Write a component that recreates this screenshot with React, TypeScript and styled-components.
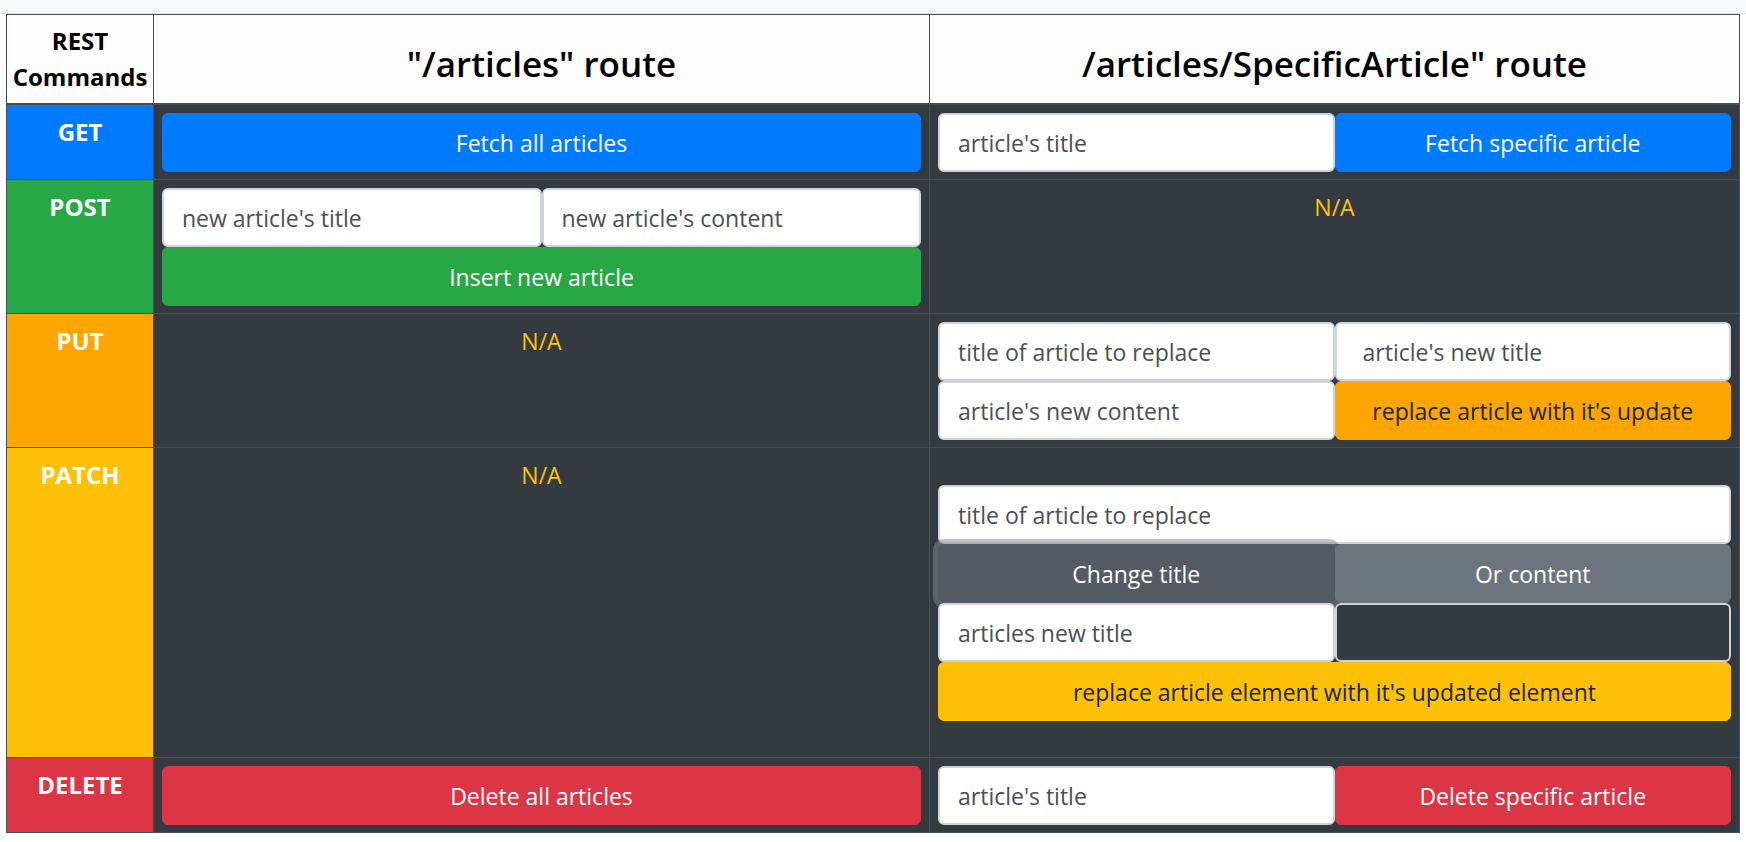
import React from 'react';
import styled, { createGlobalStyle } from 'styled-components';

const GlobalStyle = createGlobalStyle`
  html, body {
    margin: 0;
    padding: 0;
    background: #fff;
    font-family: "Open Sans", "Noto Sans", sans-serif;
    color: #212529;
  }
  * {
    box-sizing: border-box;
  }
`;

const TopBar = styled.div`
  height: 14px;
  background: #f8f9fa;
  border-bottom: 1px solid #dee2e6;
`;

const Page = styled.div`
  padding: 0 6px;
`;

const Table = styled.div`
  display: grid;
  grid-template-columns: 147px 776fr 810fr;
  border-left: 1px solid #454d55;
  border-top: 1px solid #454d55;
`;

const HeadCell = styled.div`
  height: 90px;
  background: #fdfdfd;
  border-right: 1px solid #454d55;
  border-bottom: 2px solid #454d55;
  display: flex;
  align-items: center;
  justify-content: center;
  text-align: center;
`;

const HeadLabel = styled.div`
  font-size: 24px;
  line-height: 36px;
  font-weight: 700;
  color: #000;
`;

const RouteTitle = styled.h3`
  margin: 0;
  padding-top: 8px;
  font-size: 35px;
  line-height: 43px;
  font-weight: 600;
  color: #000;
`;

const CommandCell = styled.div<{ $bg: string }>`
  background: ${p => p.$bg};
  border-right: 1px solid #454d55;
  border-bottom: 1px solid #454d55;
  padding-top: 12px;
  text-align: center;
  font-size: 24px;
  line-height: 30px;
  font-weight: 700;
  color: #fff;
`;

const BodyCell = styled.div<{ $padY?: string }>`
  background: #343a40;
  border-right: 1px solid #454d55;
  border-bottom: 1px solid #454d55;
  padding: ${p => p.$padY ?? '8px 8px 7px'};
`;

const NotApplicable = styled.div`
  background: #343a40;
  border-right: 1px solid #454d55;
  border-bottom: 1px solid #454d55;
  padding-top: 12px;
  text-align: center;
  font-size: 23px;
  line-height: 30px;
  color: #ffc107;
`;

const Controls = styled.div<{ $cols: number }>`
  display: grid;
  grid-template-columns: repeat(${p => p.$cols}, 1fr);
`;

const Field = styled.input<{ $dark?: boolean; $indent?: number; $wide?: boolean }>`
  position: relative;
  height: 59px;
  width: 100%;
  min-width: 0;
  margin: 0;
  padding: 0 0 0 ${p => p.$indent ?? 18}px;
  grid-column: ${p => (p.$wide ? '1 / -1' : 'auto')};
  background: ${p => (p.$dark ? '#343a40' : '#fff')};
  border: 2px solid #ced4da;
  border-radius: 6px;
  font-family: inherit;
  font-size: 23px;
  color: #495057;
  outline: none;

  &::placeholder {
    color: #495057;
    opacity: 1;
  }
`;

const Button = styled.button<{ $bg: string; $fg?: string; $wide?: boolean; $focus?: boolean }>`
  position: relative;
  height: 59px;
  margin: 0;
  padding: 0 16px;
  grid-column: ${p => (p.$wide ? '1 / -1' : 'auto')};
  background: ${p => p.$bg};
  border: 1px solid ${p => p.$bg};
  border-radius: 6px;
  font-family: inherit;
  font-size: 23px;
  color: ${p => p.$fg ?? '#fff'};
  text-align: center;
  box-shadow: ${p => (p.$focus ? '0 0 0 5px rgba(130, 138, 145, 0.5)' : 'none')};
  cursor: pointer;
`;

const COLORS = {
  get: '#007bff',
  post: '#28a745',
  put: '#ffa500',
  patch: '#ffc107',
  del: '#dc3545',
  secondary: '#6c757d',
  secondaryActive: '#545b62',
  dark: '#212529',
};

export default function App() {
  return (
    <>
      <GlobalStyle />
      <TopBar />
      <Page>
        <Table>
          <HeadCell>
            <HeadLabel>
              REST
              <br />
              Commands
            </HeadLabel>
          </HeadCell>
          <HeadCell>
            <RouteTitle>"/articles" route</RouteTitle>
          </HeadCell>
          <HeadCell>
            <RouteTitle>/articles/SpecificArticle" route</RouteTitle>
          </HeadCell>

          <CommandCell $bg={COLORS.get}>GET</CommandCell>
          <BodyCell>
            <Controls $cols={1}>
              <Button $bg={COLORS.get}>Fetch all articles</Button>
            </Controls>
          </BodyCell>
          <BodyCell>
            <Controls $cols={2}>
              <Field placeholder="article's title" />
              <Button $bg={COLORS.get}>Fetch specific article</Button>
            </Controls>
          </BodyCell>

          <CommandCell $bg={COLORS.post}>POST</CommandCell>
          <BodyCell>
            <Controls $cols={2}>
              <Field placeholder="new article's title" />
              <Field placeholder="new article's content" />
              <Button $bg={COLORS.post} $wide>
                Insert new article
              </Button>
            </Controls>
          </BodyCell>
          <NotApplicable>N/A</NotApplicable>

          <CommandCell $bg={COLORS.put}>PUT</CommandCell>
          <NotApplicable>N/A</NotApplicable>
          <BodyCell>
            <Controls $cols={2}>
              <Field placeholder="title of article to replace" />
              <Field placeholder="article's new title" $indent={26} />
              <Field placeholder="article's new content" />
              <Button $bg={COLORS.put} $fg={COLORS.dark}>
                replace article with it's update
              </Button>
            </Controls>
          </BodyCell>

          <CommandCell $bg={COLORS.patch}>PATCH</CommandCell>
          <NotApplicable>N/A</NotApplicable>
          <BodyCell $padY="37px 8px 36px">
            <Controls $cols={2}>
              <Field placeholder="title of article to replace" $wide />
              <Button $bg={COLORS.secondaryActive} $focus>
                Change title
              </Button>
              <Button $bg={COLORS.secondary}>Or content</Button>
              <Field placeholder="articles new title" />
              <Field $dark />
              <Button $bg={COLORS.patch} $fg={COLORS.dark} $wide>
                replace article element with it's updated element
              </Button>
            </Controls>
          </BodyCell>

          <CommandCell $bg={COLORS.del}>DELETE</CommandCell>
          <BodyCell>
            <Controls $cols={1}>
              <Button $bg={COLORS.del}>Delete all articles</Button>
            </Controls>
          </BodyCell>
          <BodyCell>
            <Controls $cols={2}>
              <Field placeholder="article's title" />
              <Button $bg={COLORS.del}>Delete specific article</Button>
            </Controls>
          </BodyCell>
        </Table>
      </Page>
    </>
  );
}
